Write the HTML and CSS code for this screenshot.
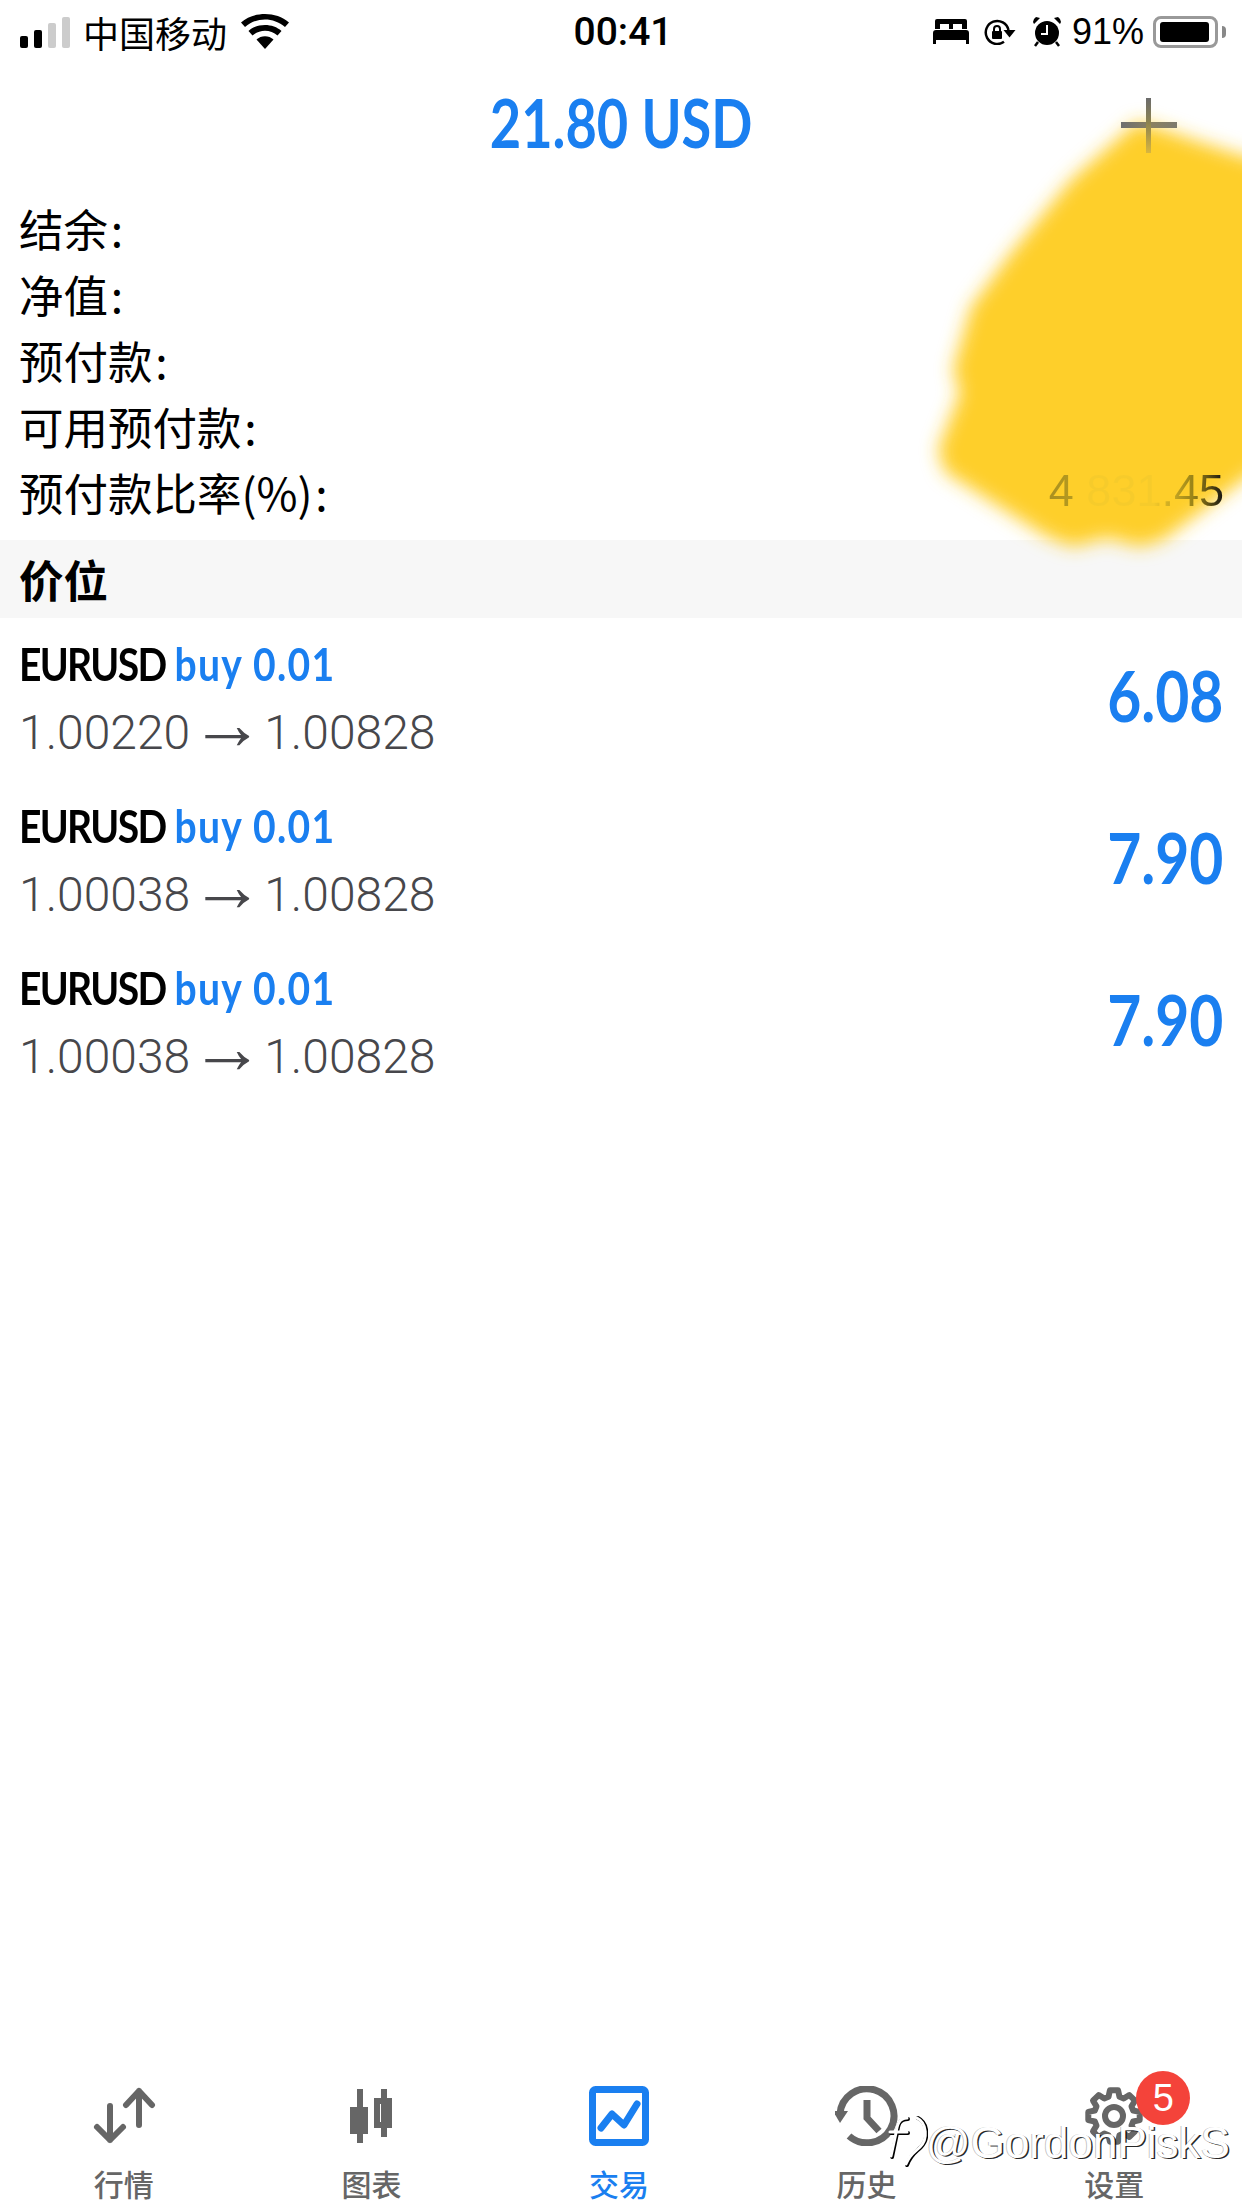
FILE: index.html
```html
<!DOCTYPE html>
<html lang="zh">
<head>
  <meta charset="UTF-8">
  <meta name="viewport" content="width=device-width, initial-scale=1.0">
  <title>交易</title>
  <link rel="stylesheet" href="styles.css">
</head>
<body>
  <div class="page">
    <div class="status">
      <div class="status-left">
        <div class="signal">
          <span class="bar b1"></span><span class="bar b2"></span><span class="bar b3"></span><span class="bar b4"></span>
        </div>
        <span class="carrier">中国移动</span>
        <svg class="wifi" width="48" height="36" viewBox="0 0 48 36">
          <path d="M24 35 L15.500 25.500 C20 21 28 21 32.500 25.500 Z"/>
          <path d="M11.500 21.500 L7.500 17 C16 9 32 9 40.500 17 L36.500 21.500 C29.500 15 18.500 15 11.500 21.500 Z"/>
          <path d="M4 13 L0 8.500 C13 -2.800 35 -2.800 48 8.500 L44 13 C32.500 3 15.500 3 4 13 Z"/>
        </svg>
      </div>
      <span class="time">00:41</span>
      <div class="status-right">
        <svg width="36" height="26" viewBox="0 0 36 26">
          <path d="M4 0 H32 Q34 0 34 2 V10 H2 V2 Q2 0 4 0 Z"/>
          <path d="M0 14 Q0 11 3 11 H33 Q36 11 36 14 V25 H33 V21 H3 V25 H0 Z"/>
          <rect x="7" y="5" width="9" height="5" fill="#fff"/>
          <rect x="20" y="5" width="9" height="5" fill="#fff"/>
        </svg>
        <svg class="rot" width="32" height="26" viewBox="0 0 32 26">
          <path d="M20 22.800 A11.500 11.500 0 1 1 24.500 11" fill="none" stroke="#000" stroke-width="2.500"/>
          <path d="M19.500 11 H31.500 L25.500 18.500 Z"/>
          <rect x="8" y="12" width="10" height="8" rx="1"/>
          <path d="M10 12 V10 A3 3 0 0 1 16 10 V12" fill="none" stroke="#000" stroke-width="2"/>
        </svg>
        <svg class="alarm" width="28" height="30" viewBox="0 0 28 30">
          <circle cx="14" cy="16" r="12"/>
          <path d="M1 7 L7 1 L3 0 Q0 2 0 5 Z M27 7 L21 1 L25 0 Q28 2 28 5 Z"/>
          <path d="M5 25 L2 29 M23 25 L26 29" stroke="#000" stroke-width="2.500"/>
          <path d="M14 8 V17 H8" fill="none" stroke="#fff" stroke-width="2"/>
        </svg>
        <span class="pct">91%</span>
        <div class="battery"><div class="battery-fill"></div></div>
        <div class="battery-nub"></div>
      </div>
    </div>

    <div class="title-bar">
      <h1 class="title">21.80 USD</h1>
      <svg class="plus" width="56" height="56" viewBox="0 0 56 56">
        <defs>
          <linearGradient id="plusV" x1="0" y1="0" x2="0" y2="1">
            <stop offset="0" stop-color="#6b6b6b"/>
            <stop offset="0.45" stop-color="#8d8350"/>
            <stop offset="1" stop-color="#d9b63e"/>
          </linearGradient>
          <linearGradient id="plusH" x1="0" y1="0" x2="1" y2="0">
            <stop offset="0" stop-color="#6f6f6f"/>
            <stop offset="0.55" stop-color="#8a8060"/>
            <stop offset="1" stop-color="#7d7a6e"/>
          </linearGradient>
        </defs>
        <rect x="0" y="24" width="56" height="6" fill="url(#plusH)"/>
        <rect x="25" y="0" width="5" height="55" fill="url(#plusV)"/>
      </svg>
    </div>

    <div class="summary">
      <div class="summary-row"><span>结余&#8202;:</span></div>
      <div class="summary-row"><span>净值&#8202;:</span></div>
      <div class="summary-row"><span>预付款&#8202;:</span></div>
      <div class="summary-row"><span>可用预付款&#8202;:</span></div>
      <div class="summary-row"><span>预付款比率(%)&#8202;:</span><span class="margin-level">4 831.45</span></div>
    </div>

    <div class="section">价位</div>

    <div class="position">
      <div class="position-info">
        <div class="position-name">EURUSD <span class="blue">buy 0.01</span></div>
        <div class="position-price">1.00220<span class="arrow">→</span>1.00828</div>
      </div>
      <div class="position-profit">6.08</div>
    </div>
    <div class="position">
      <div class="position-info">
        <div class="position-name">EURUSD <span class="blue">buy 0.01</span></div>
        <div class="position-price">1.00038<span class="arrow">→</span>1.00828</div>
      </div>
      <div class="position-profit">7.90</div>
    </div>
    <div class="position">
      <div class="position-info">
        <div class="position-name">EURUSD <span class="blue">buy 0.01</span></div>
        <div class="position-price">1.00038<span class="arrow">→</span>1.00828</div>
      </div>
      <div class="position-profit">7.90</div>
    </div>

    <nav class="tabs">
      <div class="tab">
        <svg width="64" height="60" viewBox="0 0 64 60" fill="none" stroke="#666" stroke-width="6" stroke-linecap="round" stroke-linejoin="round">
          <path d="M18 20 V54 M5 41 L18 54 L31 41"/>
          <path d="M47 39 V5 M34 19 L47 5 L60 19"/>
        </svg>
        <span>行情</span>
      </div>
      <div class="tab">
        <svg width="64" height="60" viewBox="0 0 64 60" fill="#666">
          <rect x="18" y="3" width="6" height="54"/>
          <rect x="11" y="21" width="18" height="27"/>
          <rect x="42" y="3" width="6" height="48"/>
          <path fill-rule="evenodd" d="M35 12 H53 V42 H35 Z M41 18 V36 H47 V18 Z"/>
        </svg>
        <span>图表</span>
      </div>
      <div class="tab active">
        <svg width="64" height="60" viewBox="0 0 64 60" fill="none" stroke="#1a7ff0" stroke-width="7" stroke-linecap="round" stroke-linejoin="round">
          <rect x="5.500" y="3.500" width="53" height="53" rx="3"/>
          <path d="M14 42 L25 28 L37 39 L50 18"/>
        </svg>
        <span>交易</span>
      </div>
      <div class="tab">
        <svg width="64" height="60" viewBox="0 0 64 60" fill="none" stroke="#666" stroke-width="7">
          <path d="M5 28 A27 27 0 1 1 14 50"/>
          <path d="M-2 25 H13 L5 37 Z" fill="#666" stroke="none"/>
          <path d="M32 14 V32 L44 45"/>
        </svg>
        <span>历史</span>
      </div>
      <div class="tab">
        <svg width="64" height="60" viewBox="0 0 64 60" fill="none" stroke="#666" stroke-width="6" stroke-linejoin="round">
          <path d="M26.500 10.800 L27.900 4.300 H36.100 L37.500 10.800 L41.700 12.500 L47.300 9 L53 14.700 L49.500 20.300 L51.200 24.500 L57.700 25.900 V34.100 L51.200 35.500 L49.500 39.700 L53 45.300 L47.300 51 L41.700 47.500 L37.500 49.200 L36.100 55.700 H27.900 L26.500 49.200 L22.300 47.500 L16.700 51 L11 45.300 L14.500 39.700 L12.800 35.500 L6.300 34.100 V25.900 L12.800 24.500 L14.500 20.300 L11 14.700 L16.700 9 L22.300 12.500 Z"/>
          <circle cx="32" cy="30" r="9"/>
        </svg>
        <span>设置</span>
        <div class="badge">5</div>
      </div>
    </nav>

    <svg class="blob" width="342" height="490" viewBox="900 90 342 490">
      <defs>
        <filter id="soft" x="-10%" y="-10%" width="120%" height="120%">
          <feGaussianBlur stdDeviation="9"/>
        </filter>
      </defs>
      <path filter="url(#soft)" fill="#fecf2c" d="M1137 122 C1165 128 1210 148 1270 163 L1270 460 L1163 540 L1140 547 L1107 538 L1073 547 L1047 537 L945 472 L938 450 L960 393 L953 370 L971 307 L1011 253 L1071 180 Z"/>
    </svg>

    <div class="watermark">
      <svg width="44" height="56" viewBox="0 0 44 56" fill="none" stroke-linecap="round">
        <path d="M24 4 C15 4 14 10 13 18 L8 42 M7 18 H24" stroke="#000" stroke-width="4"/>
        <path d="M34 3 C44 8 45 24 37 32 C32 37 27 39 23 50" stroke="#000" stroke-width="4"/>
        <path d="M23 3 C15 3 13 10 12 18 L7 41 M6 17 H23" stroke="#fff" stroke-width="3"/>
        <path d="M33 3 C43 8 44 24 36 32 C31 37 26 39 22 49" stroke="#fff" stroke-width="3"/>
      </svg>
      <span class="watermark-text">@GordonPiskS</span>
    </div>
  </div>
</body>
</html>
```

FILE: styles.css
```css
* {
  box-sizing: border-box;
}
body {
  margin: 0;
  background: #fff;
  color: #000;
  font-family: "Noto Sans CJK SC", "Liberation Sans", sans-serif;
}
.page {
  position: relative;
  width: 1242px;
  height: 2208px;
  overflow: hidden;
  display: flex;
  flex-direction: column;
}

/* status bar */
.status {
  height: 60px;
  padding: 3px 16px 0 20px;
  display: flex;
  align-items: center;
  justify-content: space-between;
}
.status-left {
  width: 480px;
  display: flex;
  align-items: center;
}
.signal {
  display: flex;
  align-items: flex-end;
  gap: 6px;
  height: 32px;
}
.bar {
  width: 8px;
  border-radius: 2px;
  background: #000;
}
.b1 { height: 12px; }
.b2 { height: 18px; }
.b3 { height: 25px; background: #ccc; }
.b4 { height: 31px; background: #ccc; }
.carrier {
  margin-left: 13px;
  font-size: 36px;
  line-height: 60px;
}
.wifi {
  margin-left: 14px;
  margin-top: 0;
}
.time {
  font-family: Roboto, sans-serif;
  font-weight: 500;
  font-size: 39px;
}
.status-right {
  width: 480px;
  display: flex;
  align-items: center;
  justify-content: flex-end;
}
.rot {
  margin-left: 15px;
}
.alarm {
  margin-left: 17px;
}
.pct {
  margin-left: 11px;
  font-family: "Liberation Sans", sans-serif;
  font-size: 36px;
}
.battery {
  margin-left: 9px;
  width: 65px;
  height: 32px;
  padding: 3px 4px;
  border: 3px solid #999;
  border-radius: 8px;
}
.battery-fill {
  width: 49px;
  height: 100%;
  background: #000;
  border-radius: 3px;
}
.battery-nub {
  margin-left: 4px;
  width: 4px;
  height: 12px;
  background: #888;
  border-radius: 0 4px 4px 0;
}

/* header */
.title-bar {
  position: relative;
  height: 130px;
  padding-bottom: 5px;
  display: flex;
  align-items: center;
  justify-content: center;
}
.title {
  margin: 0;
  font-family: Lato, sans-serif;
  font-weight: 700;
  font-size: 66px;
  color: #1a7ff0;
  transform: scaleX(0.82);
}
.plus {
  position: absolute;
  z-index: 2;
  left: 1121px;
  top: 38px;
}

/* account summary */
.summary {
  padding: 4px 18px 16px 19px;
}
.summary-row {
  height: 66px;
  display: flex;
  align-items: center;
  justify-content: space-between;
  font-size: 44.500px;
}
.margin-level {
  position: relative;
  z-index: 2;
  font-family: "Liberation Sans", sans-serif;
  font-size: 45px;
  background: linear-gradient(to right, #a98f1f 0, #b59a20 13%, #f6cb2b 17%, #f6cb2b 60%, #d8b526 66%, #c2a322 72%, #9a8418 82%, #6a5a14 90%, #111 100%);
  -webkit-background-clip: text;
  background-clip: text;
  color: transparent;
}

/* positions */
.section {
  height: 78px;
  padding: 0 19px 2px;
  display: flex;
  align-items: center;
  background: #f7f7f7;
  font-size: 44.500px;
  font-weight: 700;
}
.position {
  height: 162px;
  padding: 12px 19px 14px 19px;
  display: flex;
  align-items: center;
  justify-content: space-between;
}
.position-name {
  height: 68px;
  line-height: 68px;
  font-family: Lato, sans-serif;
  font-weight: 700;
  font-size: 46px;
  letter-spacing: -2px;
  white-space: nowrap;
  transform: scaleX(0.85);
  transform-origin: left center;
}
.blue {
  margin-left: 1.500px;
  letter-spacing: 1.500px;
  color: #1a7ff0;
}
.position-price {
  height: 68px;
  margin-top: 1px;
  line-height: 68px;
  font-family: Roboto, sans-serif;
  font-weight: 300;
  font-size: 48px;
  color: #47474b;
}
.arrow {
  font-family: "Liberation Sans", sans-serif;
  font-size: 74px;
  line-height: 0;
}
.position-profit {
  margin-top: -6px;
  font-family: Lato, sans-serif;
  font-weight: 700;
  font-size: 70px;
  color: #1a7ff0;
  transform: scaleX(0.84);
  transform-origin: right center;
}

/* bottom tabs */
.tabs {
  margin-top: auto;
  height: 122px;
  padding-right: 4px;
  display: grid;
  grid-template-columns: repeat(5, 1fr);
}
.tab {
  position: relative;
  display: flex;
  flex-direction: column;
  align-items: center;
  font-size: 30px;
  font-weight: 500;
  color: #666;
}
.tab span {
  margin-top: 19px;
  line-height: 36px;
}
.tab.active {
  color: #1a7ff0;
}
.badge {
  position: absolute;
  left: 146px;
  top: -15px;
  width: 54px;
  height: 54px;
  border-radius: 50%;
  background: #f4433a;
  color: #fff;
  font-family: "Liberation Sans", sans-serif;
  font-weight: 400;
  font-size: 38px;
  line-height: 54px;
  text-align: center;
}

/* scribble over the values */
.blob {
  position: absolute;
  z-index: 1;
  left: 900px;
  top: 90px;
}

/* screenshot watermark */
.watermark {
  position: absolute;
  z-index: 3;
  left: 884px;
  top: 2115px;
  display: flex;
  align-items: center;
}
.watermark-text {
  margin-left: -2px;
  font-family: "Liberation Sans", sans-serif;
  font-size: 44px;
  color: #fff;
  text-shadow: 1.500px 1px 0 rgba(0, 0, 0, 0.85), -1px 0 0 rgba(0, 0, 0, 0.25);
}
```
